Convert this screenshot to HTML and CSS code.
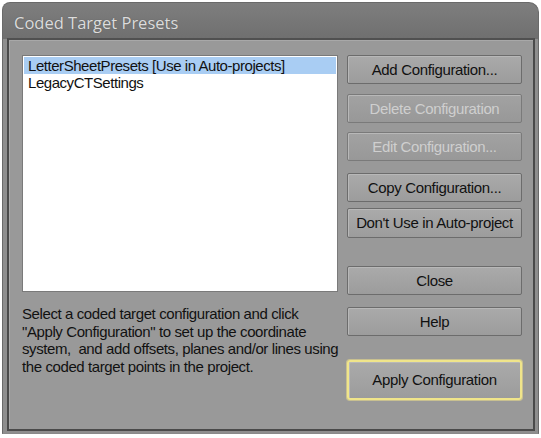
FILE: index.html
```html
<!DOCTYPE html>
<html>
<head>
<meta charset="utf-8">
<link rel="stylesheet" href="styles.css">
</head>
<body>
<div class="window">
  <div class="titlebar">Coded Target Presets</div>
  <div class="panel">
    <div class="left">
      <div class="listbox">
        <div class="item selected">LetterSheetPresets [Use in Auto-projects]</div>
        <div class="item">LegacyCTSettings</div>
      </div>
      <p class="desc">Select a coded target configuration and click<br>"Apply Configuration" to set up the coordinate<br>system,&nbsp; and add offsets, planes and/or lines using<br>the coded target points in the project.</p>
    </div>
    <div class="buttons">
      <div class="btn b-add">Add Configuration...</div>
      <div class="btn disabled b-del">Delete Configuration</div>
      <div class="btn disabled b-edit">Edit Configuration...</div>
      <div class="btn b-copy">Copy Configuration...</div>
      <div class="btn b-dont">Don't Use in Auto-project</div>
      <div class="btn b-close">Close</div>
      <div class="btn b-help">Help</div>
      <div class="btn default b-apply">Apply Configuration</div>
    </div>
  </div>
</div>
</body>
</html>
```

FILE: styles.css
```css
html, body {
  margin: 0;
  padding: 0;
  background: #ffffff;
}
body {
  width: 541px;
  height: 438px;
  overflow: hidden;
  font-family: "Liberation Sans", Arial, sans-serif;
}
.window {
  margin: 2px 0 0 2px;
  width: 537px;
  height: 432px;
  box-sizing: border-box;
  border-radius: 8px 10px 0 0;
  background: linear-gradient(#7e7e7e, #6f6f6f 36px, #8e8e8e 36px);
  border: 1px solid #6a6a6a;
  border-bottom: 1px solid #8a8a8a;
  padding: 0 3px 2px 4px;
  display: flex;
  flex-direction: column;
}
.titlebar {
  height: 35px;
  box-sizing: border-box;
  padding: 10px 0 0 7px;
  color: #dcdcdc;
  font-family: "Open Sans", "Noto Sans", sans-serif;
  font-size: 16.5px;
  line-height: 20px;
  text-shadow: 0 0 1px #555;
}
.panel {
  flex: 1;
  box-sizing: border-box;
  border: 2px solid #4a4a4a;
  border-top-color: #505050;
  background: #999999;
  display: flex;
  padding: 15px 0 0 13px;
  box-shadow: inset 1px 1px 0 #a8a8a8;
}
.left {
  width: 316px;
  display: flex;
  flex-direction: column;
}
.listbox {
  height: 237px;
  box-sizing: border-box;
  background: #ffffff;
  border: 1px solid #7a7a7a;
  padding: 1px 1px 0 1px;
}
.item {
  height: 17px;
  line-height: 17px;
  padding-left: 4px;
  font-size: 15px;
  color: #111;
  letter-spacing: -0.45px;
}
.item.selected {
  background: #a9cdf3;
}
.desc {
  margin: 13px 0 0 0;
  width: 330px;
  white-space: nowrap;
  font-size: 15px;
  line-height: 17.5px;
  color: #111;
  letter-spacing: -0.4px;
}
.buttons {
  margin-left: 9px;
  width: 175px;
  display: flex;
  flex-direction: column;
}
.btn {
  height: 29px;
  box-sizing: border-box;
  border: 1px solid #6c6c6c;
  border-radius: 2px;
  background: linear-gradient(#aaaaaa, #9c9c9c);
  box-shadow: inset 1px 1px 0 #b8b8b8;
  color: #111;
  font-size: 15px;
  letter-spacing: -0.35px;
  line-height: 27px;
  text-align: center;
}
.btn.disabled {
  color: #cfcfcf;
  background: linear-gradient(#a2a2a2, #989898);
  border-color: #7a7a7a;
}
.b-add { margin-top: 0; }
.b-del { margin-top: 10px; }
.b-edit { margin-top: 9px; }
.b-copy { margin-top: 12px; }
.b-dont { margin-top: 6px; height: 30px; }
.b-close { margin-top: 28px; }
.b-help { margin-top: 12px; }
.b-apply {
  margin-top: 24px;
  height: 40px;
  line-height: 36px;
  border: 2px solid #f0e58a;
  border-radius: 3px;
  box-shadow: 0 0 0 1px #c8c090, inset 1px 1px 0 #b8b8b8;
}
```
